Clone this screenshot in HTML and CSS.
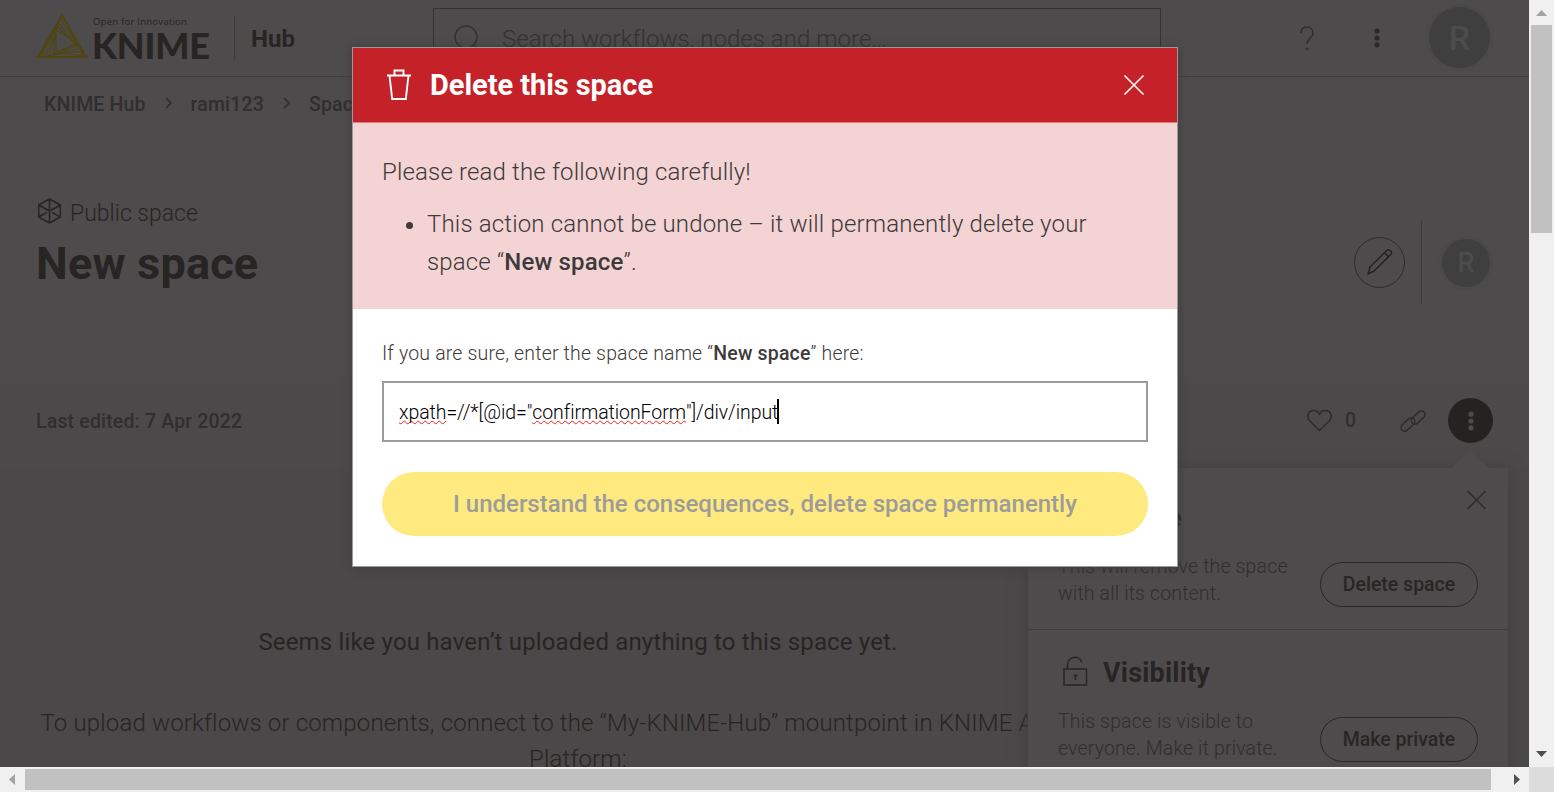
FILE: index.html
```html
<!DOCTYPE html>
<html lang="en">
<head>
<meta charset="utf-8">
<title>New space – KNIME Hub</title>
<link rel="stylesheet" href="styles.css">
</head>
<body>
<div class="window">
  <div class="page">
    <header class="topbar">
      <div class="brand">
        <svg class="brand-mark" width="52" height="47" viewBox="0 0 52 47" fill="none" stroke="#4f4613" stroke-width="1.100">
          <path d="M26 3.500 50 45H2Z" stroke-width="2.200"/>
          <path d="M24 7 20 18M26 4 20 18M20 18 3 45M20 15 6 44M22 10 4 43M20 18v22M20 20 9 45M20 20 13 44M20 22 17 43M26 4 44 35M24 7 46 38M22.500 10.500 47 41M21 14 45 38M20 18 42 31M40.700 30 50 45M40.700 30 47 44M42 31 20.700 40M43 33 17 42M45 36 13 43.500M46.500 39 10 44M20.700 40 47 44"/>
        </svg>
        <div class="brand-words">
          <span class="brand-tag">Open for Innovation</span>
          <span class="brand-name">KNIME</span>
        </div>
      </div>
      <span class="product">Hub</span>
      <div class="search">
        <svg width="30" height="30" viewBox="0 0 30 30" fill="none" stroke="#333131" stroke-width="1.4"><circle cx="13" cy="13" r="11"/><path d="m21 21 6 6"/></svg>
        <span>Search workflows, nodes and more…</span>
      </div>
      <div class="top-actions">
        <svg width="16" height="26" viewBox="0 0 16 26" fill="none" stroke="#2d2b2b" stroke-width="1.4"><path d="M2 8C2 4 4.500 2 8 2s6 2.500 6 6c0 5-6 5-6 11"/><circle cx="8" cy="24" r="1" fill="#2d2b2b" stroke-width=".8"/></svg>
        <svg class="top-dots" width="8" height="22" viewBox="0 0 8 22" fill="#2a2828"><circle cx="4" cy="4" r="2.600"/><circle cx="4" cy="11" r="2.600"/><circle cx="4" cy="17.800" r="2.600"/></svg>
        <span class="avatar">R</span>
      </div>
    </header>
    <section class="hero">
      <nav class="crumbs">
        <span>KNIME Hub</span>
        <svg width="8" height="14" viewBox="0 0 8 14" fill="none" stroke="#2d2b2b" stroke-width="1.6"><path d="m1 2 5 5-5 5"/></svg>
        <span>rami123</span>
        <svg width="8" height="14" viewBox="0 0 8 14" fill="none" stroke="#2d2b2b" stroke-width="1.6"><path d="m1 2 5 5-5 5"/></svg>
        <span>Spaces</span>
      </nav>
      <div class="hero-row">
        <div class="hero-title">
          <p class="kind">
            <svg width="26" height="26" viewBox="0 0 26 26" fill="none" stroke="#272523" stroke-width="1.5" stroke-linejoin="round"><path d="m13.500 1 10.800 6v12l-10.800 6L2.700 19V7ZM13.500 1v10.500M13.500 14v11M2.700 7l10.800 6 10.800-6M2.700 19l8.300-4.600M24.300 19l-8.300-4.600"/></svg>
            <span>Public space</span>
          </p>
          <h1>New space</h1>
        </div>
        <div class="hero-tools">
          <span class="edit">
            <svg width="28" height="28" viewBox="0 0 28 28" fill="none" stroke="#252422" stroke-width="1.6" stroke-linejoin="round"><path d="M2 26 4 19 20.500 2.800a2.800 2.800 0 0 1 4 4L8 23ZM18.500 4.800l4 4"/></svg>
          </span>
          <span class="owner"><span class="avatar avatar-small">R</span></span>
        </div>
      </div>
    </section>
    <section class="meta">
      <span class="edited">Last edited: 7 Apr 2022</span>
      <div class="meta-tools">
        <svg width="26" height="23" viewBox="0 0 26 23" fill="none" stroke="#2d2b2b" stroke-width="1.500" stroke-linejoin="round"><path d="M13.500 21.500 3.500 11.500C0 7.500 2.300 1.500 7.500 1.500c3 0 5 1.500 6 4 1-2.500 3-4 6-4 5.200 0 7.500 6 4 10Z"/></svg>
        <span class="likes">0</span>
        <svg class="link" width="26" height="22" viewBox="0 0 26 22" fill="none" stroke="#2d2b2b" stroke-width="1.500"><rect x="0" y="7.300" width="16" height="7.400" rx="3.700" transform="rotate(-43 8 11) translate(-2.500 2.500)"/><rect x="10" y="7.300" width="16" height="7.400" rx="3.700" transform="rotate(-43 18 11) translate(2.500 -2.500)"/></svg>
        <span class="more"><svg width="8" height="22" viewBox="0 0 8 22" fill="#4d4b4b"><circle cx="4" cy="4.200" r="2.600"/><circle cx="4" cy="11" r="2.600"/><circle cx="4" cy="17.800" r="2.600"/></svg></span>
      </div>
    </section>
    <main class="content">
      <p class="empty">Seems like you haven’t uploaded anything to this space yet.</p>
      <p class="hint">To upload workflows or components, connect to the “My-KNIME-Hub” mountpoint in KNIME Analytics<br>Platform:</p>
    </main>

    <aside class="panel">
      <svg class="panel-close" width="22" height="22" viewBox="0 0 22 22" stroke="#2d2b2b" stroke-width="1.500"><path d="m2.500 2 18 18M20.500 2l-18 18"/></svg>
      <section class="panel-item">
        <h2><span class="icon-slot"></span>Delete</h2>
        <div class="panel-row"><p>This will remove the space<br>with all its content.</p><span class="pill">Delete space</span></div>
      </section>
      <section class="panel-item">
        <h2><svg class="lock" width="30" height="32" viewBox="0 0 30 32" fill="none" stroke="#282625" stroke-width="1.500"><path d="M3 14h22.500v16H3ZM6.500 14V9.500a7.400 7.400 0 0 1 14.500-1.800"/><path d="M12.500 20.500h4M14.500 20v5"/></svg>Visibility</h2>
        <div class="panel-row"><p>This space is visible to<br>everyone. Make it private.</p><span class="pill">Make private</span></div>
      </section>
    </aside>
    <span class="panel-tip"></span>

    <div class="dialog">
      <header class="dialog-head">
        <svg width="26" height="32" viewBox="0 0 26 32" fill="none" stroke="#fff" stroke-width="1.900"><path d="M1 6.500h24M8.500 6.500v-5h9v5M3.500 6.500 6.200 30h13.600l2.700-23.500"/></svg>
        <h2>Delete this space</h2>
        <svg class="dialog-close" width="22" height="22" viewBox="0 0 22 22" stroke="#fff" stroke-width="1.600"><path d="m1.500 1.500 19 19M20.500 1.500l-19 19"/></svg>
      </header>
      <div class="notice">
        <p>Please read the following carefully!</p>
        <ul><li>This action cannot be undone – it will permanently delete your<br>space “<b>New space</b>”.</li></ul>
      </div>
      <div class="form">
        <p class="label">If you are sure, enter the space name “<b>New space</b>” here:</p>
        <div class="field"><span class="typo">xpath</span>=//*[@id="<span class="typo">confirmationForm</span>"]/div/input<span class="caret"></span></div>
        <div class="confirm">I understand the consequences, delete space permanently</div>
      </div>
    </div>
  </div>
  <div class="vbar">
    <svg width="25" height="25" viewBox="0 0 25 25" fill="#a3a3a3"><path d="m7 16 5.500-6 5.500 6Z"/></svg>
    <span class="vthumb"></span>
    <svg class="vdown" width="25" height="25" viewBox="0 0 25 25" fill="#505050"><path d="m7 9 5.500 6L18 9Z"/></svg>
  </div>
  <div class="hbar">
    <svg width="25" height="25" viewBox="0 0 25 25" fill="#a3a3a3"><path d="m15 7-6 5.500 6 5.500Z"/></svg>
    <span class="hthumb"></span>
    <svg class="hright" width="25" height="25" viewBox="0 0 25 25" fill="#505050"><path d="m10 7 6 5.500-6 5.500Z"/></svg>
  </div>
  <div class="corner"></div>
</div>
</body>
</html>
```
FILE: styles.css
```css
* { box-sizing: border-box; }
body, p, h1, h2, ul { margin: 0; padding: 0; }
body { font-family: Roboto, sans-serif; font-weight: 300; color: #272523; overflow: hidden; }
svg { display: block; flex: none; }
.window { display: grid; grid-template: 767px 25px / 1529px 25px; width: 1554px; height: 792px; }
.page { position: relative; overflow: hidden; background: #4a4848; white-space: nowrap; }

.topbar { display: flex; height: 77px; background: #4d4b4b; border-bottom: 1px solid #3f3d3d; }
.brand { display: flex; width: 235px; height: 46px; margin-top: 15px; padding-left: 36px; border-right: 1px solid #3f3d3d; }
.brand-mark { margin-top: -3px; }
.brand-words { display: flex; flex-direction: column; padding-left: 4px; }
.brand-tag { height: 14px; padding-left: 1px; font: 400 9.6px/14px "Open Sans", sans-serif; letter-spacing: .2px; }
.brand-name { font: 900 36px/32px Lato, sans-serif; letter-spacing: -.2px; }
.product { width: 198px; padding-left: 16px; font-size: 24px; font-weight: 700; line-height: 78px; }
.search { display: flex; align-items: center; gap: 19px; width: 728px; height: 62px; margin-top: 8px; padding-left: 19px; border: 1px solid #333131; color: #343232; font-size: 24px; letter-spacing: .03px; }
.search svg { margin-top: -1px; }
.top-actions { display: flex; align-items: center; flex: 1; padding-left: 138px; }
.top-dots { margin: 0 48px 0 58px; }
.avatar { display: flex; align-items: center; justify-content: center; width: 61px; height: 61px; margin-top: -1px; border-radius: 50%; background: #3f3f3f; box-shadow: 0 0 0 3px #4b4949; color: #4d4c4c; font-size: 34px; font-weight: 500; }
.avatar-small { width: 48px; height: 48px; margin-top: 2px; font-size: 27px; }

.hero { height: 300px; background: #4d4b4b; }
.crumbs { display: flex; align-items: center; height: 54px; padding-left: 44px; color: #302e2e; font-size: 19.5px; font-weight: 500; letter-spacing: .15px; }
.crumbs svg { margin: 0 18px 3px 19px; }
.hero-row { display: flex; justify-content: space-between; }
.hero-title { padding: 67px 0 0 36px; }
.kind { display: flex; gap: 8px; font-size: 23px; line-height: 32px; }
h1 { margin-top: 2px; font-size: 45px; line-height: 64px; font-weight: 700; letter-spacing: .2px; }
.hero-tools { display: flex; align-items: center; height: 84px; margin-top: 89px; padding-right: 39px; }
.edit { display: grid; place-items: center; width: 51px; height: 51px; margin-right: 16px; border: 1px solid #2d2b2b; border-radius: 50%; }
.owner { display: flex; align-items: center; height: 84px; padding-left: 20px; border-left: 1px solid #3f3d3d; }

.meta { display: flex; align-items: center; justify-content: space-between; height: 91px; padding: 0 36px; background: #4b4949; color: #302e2e; font-size: 19.5px; font-weight: 500; }
.edited { margin-top: -3px; letter-spacing: .17px; }
.meta-tools { display: flex; align-items: center; height: 45px; margin-top: -4px; }
.likes { margin: 0 44px 0 13px; }
.more { display: grid; place-items: center; width: 45px; height: 45px; margin-left: 22px; border-radius: 50%; background: #242321; }

.content { width: 1156px; padding-top: 156px; text-align: center; font-size: 24px; line-height: 36px; letter-spacing: .16px; }
.empty { font-weight: 400; }
.hint { margin-top: 45px; }

.panel { position: absolute; left: 1028px; top: 468px; width: 480px; height: 330px; background: #4d4b4b; box-shadow: 0 1px 15px #403e3e; font-size: 19.5px; line-height: 27px; }
.panel-close { position: absolute; left: 437px; top: 21px; }
.panel-tip { position: absolute; left: 1450px; top: 450px; width: 40px; height: 19px; background: #4d4b4b; clip-path: polygon(50% 0, 100% 100%, 0 100%); }
.panel-item { height: 162px; padding: 28px 30px 0; border-bottom: 1px solid #3f3d3d; }
.panel-item + .panel-item { padding-top: 21px; }
.panel-item h2 { display: flex; align-items: center; gap: 15px; height: 44px; font-size: 27px; font-weight: 700; letter-spacing: .2px; }
.icon-slot { width: 30px; }
.lock { margin: -5px -3px 0 3px; }
.panel-row { display: flex; justify-content: space-between; padding-top: 13px; color: #302e2e; }
.panel-row p { letter-spacing: .15px; }
.pill { width: 158px; height: 45px; margin-top: 9px; border: 1px solid #2a2827; border-radius: 23px; line-height: 43px; text-align: center; font-size: 19.5px; font-weight: 500; color: #282625; }

.dialog { position: absolute; left: 352px; top: 47px; width: 826px; height: 520px; border: 1px solid #9b9999; background: #fff; box-shadow: 0 1px 8px #3e3c3c; color: #3e3a39; }
.dialog-head { display: flex; align-items: center; height: 75px; padding: 0 32px 0 33px; background: #c52128; border-bottom: 1px solid #e07b80; color: #fff; }
.dialog-head h2 { margin-left: 18px; font-size: 29px; font-weight: 700; letter-spacing: -.05px; }
.dialog-close { margin-left: auto; }
.notice { height: 186px; padding: 30px 29px 0; background: #f3d3d4; font-size: 24px; line-height: 38px; letter-spacing: .16px; }
.notice ul { margin-top: 14px; padding-left: 45px; }
.notice b, .label b { font-weight: 500; }
.form { padding: 30px 29px; }
.label { font-size: 19.5px; line-height: 29px; letter-spacing: .17px; }
.field { display: flex; align-items: center; height: 61px; margin-top: 13px; padding: 2px 0 0 15px; border: 2px solid #9b9b9b; color: #000; font-size: 19.5px; letter-spacing: -.07px; }
.typo { text-decoration: underline wavy #f02020 1.3px; text-underline-offset: 1px; text-decoration-skip-ink: none; }
.caret { width: 2px; height: 25px; background: #000; margin: -2px 0 0 -1px; }
.confirm { height: 64px; margin-top: 30px; border-radius: 32px; background: #feea7f; color: #9d9c9b; text-align: center; font-size: 24px; line-height: 64px; font-weight: 500; }

.vbar { display: flex; flex-direction: column; background: #f0f0f0; }
.vthumb { width: 21px; height: 208px; margin-left: 2px; background: #c1c1c1; }
.vdown { margin-top: auto; }
.hbar { display: flex; background: #f0f0f0; }
.hthumb { width: 1466px; height: 21px; margin-top: 2px; background: #c1c1c1; }
.hright { margin-left: auto; }
.corner { background: #dcdcdc; }
```
